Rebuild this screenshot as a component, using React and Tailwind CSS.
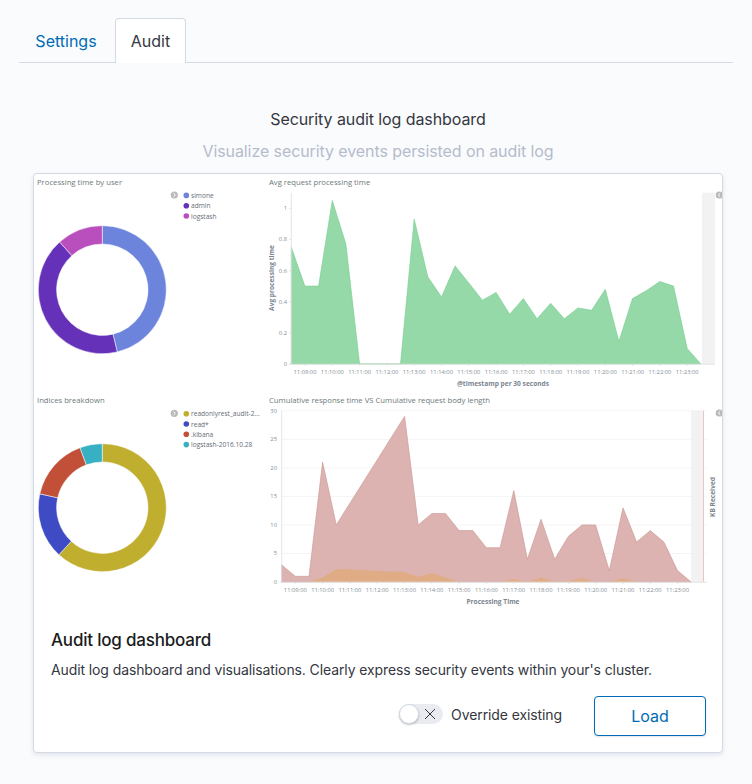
const greenData = [0.75, 0.5, 0.5, 1.05, 0.77, 0, 0, 0, 0, 0.93, 0.56, 0.43, 0.63, 0.52, 0.41, 0.46, 0.32, 0.42, 0.29, 0.39, 0.29, 0.36, 0.345, 0.48, 0.145, 0.42, 0.47, 0.53, 0.5, 0.1, 0];
const redData = [3, 1, 1, 21, 10, 13.8, 17.6, 21.4, 25.2, 29, 10, 12, 12, 9, 9, 6, 6, 16, 4, 11, 4, 8, 10, 10, 2, 13, 7, 9, 7, 2, 0];
const orangeData = [0, 0, 0, 0.8, 2.3, 2.2, 2.1, 1.95, 1.85, 1.75, 0.9, 1.6, 0.8, 0, 0, 0, 0, 0.5, 0, 0.8, 0, 0.2, 0.7, 0, 0, 0.6, 0, 0, 0, 0, 0];
const times = ['11:09:00', '11:10:00', '11:11:00', '11:12:00', '11:13:00', '11:14:00', '11:15:00', '11:16:00', '11:17:00', '11:18:00', '11:19:00', '11:20:00', '11:21:00', '11:22:00', '11:23:00'];

const chartFont = "'Open Sans', 'Liberation Sans', sans-serif";

// points of an area chart, closed along the x axis
function areaPath(data, x0, y0, stepX, scaleY) {
  const line = data.map((v, i) => `${(x0 + i * stepX).toFixed(1)},${(y0 - v * scaleY).toFixed(1)}`);
  return `M${x0},${y0} L${line.join(' L')} L${x0 + (data.length - 1) * stepX},${y0} Z`;
}

function arcPath(cx, cy, r, r2, a0, a1) {
  const pt = (rad, deg) => {
    const t = (deg * Math.PI) / 180;
    return `${(cx + rad * Math.sin(t)).toFixed(2)} ${(cy - rad * Math.cos(t)).toFixed(2)}`;
  };
  const large = a1 - a0 > 180 ? 1 : 0;
  return `M${pt(r, a0)} A${r} ${r} 0 ${large} 1 ${pt(r, a1)} L${pt(r2, a1)} A${r2} ${r2} 0 ${large} 0 ${pt(r2, a0)} Z`;
}

function Chevron({ x, y, flip }) {
  return (
    <g>
      <circle cx={x} cy={y} r="3.6" fill="#b9b9b9" />
      <path
        d={flip ? `M${x + 0.9} ${y - 1.8} L${x - 1} ${y} L${x + 0.9} ${y + 1.8}` : `M${x - 0.9} ${y - 1.8} L${x + 1} ${y} L${x - 0.9} ${y + 1.8}`}
        fill="none"
        stroke="#fff"
        strokeWidth="1"
      />
    </g>
  );
}

function DonutPanel({ viewBox, title, titleY, cy, chevronY, slices }) {
  return (
    <svg viewBox={viewBox} className="block w-full h-full" style={{ fontFamily: chartFont }}>
      <text x="37" y={titleY} fontSize="7.7" fill="#6e7a7c">{title}</text>
      <Chevron x={174.3} y={chevronY} />
      {slices.map((s, i) => (
        <g key={s.label}>
          <circle cx="186.3" cy={chevronY + 0.4 + i * 10.3} r="2.8" fill={s.color} />
          <text x="191" y={chevronY + 3 + i * 10.3} fontSize="6.6" fill="#666c75">{s.label}</text>
        </g>
      ))}
      {slices.map((s) => (
        <path key={s.color} d={arcPath(102.3, cy, 64, 45.7, s.from, s.to)} fill={s.color} stroke="#fff" strokeWidth="0.5" />
      ))}
    </svg>
  );
}

function XLabels({ x0, y, axisY }) {
  return times.map((t, i) => (
    <g key={t}>
      <line x1={x0 + i * 27.3} x2={x0 + i * 27.3} y1={axisY} y2={axisY + 2} stroke="#ddd" strokeWidth="0.7" />
      <text x={x0 + i * 27.3} y={y} fontSize="5.8" fill="#848e96" textAnchor="middle">{t}</text>
    </g>
  ));
}

function GreenChart() {
  const ticks = [0, 0.2, 0.4, 0.6, 0.8, 1];
  return (
    <svg viewBox="262 174 460 218" className="block w-full h-full" style={{ fontFamily: chartFont }}>
      <text x="269" y="185" fontSize="7.7" fill="#6e7a7c">Avg request processing time</text>
      <rect x="702" y="192.7" width="13" height="171.3" fill="#f2f2f2" />
      <path d={areaPath(greenData, 291.3, 364, 13.65, 155.7)} fill="#95d9a9" stroke="#74cd8e" strokeWidth="0.6" />
      <line x1="291.3" x2="291.3" y1="192.7" y2="364" stroke="#ddd" strokeWidth="0.8" />
      <line x1="289" x2="715" y1="364.2" y2="364.2" stroke="#e2e2e2" strokeWidth="1" />
      {ticks.map((v) => (
        <g key={v}>
          <line x1="289" x2="291.3" y1={364 - v * 155.7} y2={364 - v * 155.7} stroke="#ddd" strokeWidth="0.7" />
          <text x="287" y={366 - v * 155.7} fontSize="5.8" fill="#848e96" textAnchor="end">{v}</text>
        </g>
      ))}
      <XLabels x0={305} y={374} axisY={364} />
      <text transform="translate(274 278) rotate(-90)" fontSize="6.6" fontWeight="700" fill="#7b8590" textAnchor="middle">Avg processing time</text>
      <text x="503" y="386" fontSize="6.6" fontWeight="700" fill="#7b8590" textAnchor="middle">@timestamp per 30 seconds</text>
      <Chevron x={719.3} y={195} flip />
    </svg>
  );
}

function RedChart() {
  const ticks = [0, 5, 10, 15, 20, 25, 30];
  return (
    <svg viewBox="262 392 460 218" className="block w-full h-full" style={{ fontFamily: chartFont }}>
      <text x="269" y="403" fontSize="7.7" fill="#6e7a7c">Cumulative response time VS Cumulative request body length</text>
      <rect x="691" y="410.7" width="12.3" height="171.3" fill="#f2f2f2" />
      {ticks.map((v) => (
        <g key={v}>
          <line x1="281.7" x2="706.7" y1={582 - v * 5.71} y2={582 - v * 5.71} stroke="#f1f1f1" strokeWidth="0.8" />
          <text x="277" y={584 - v * 5.71} fontSize="5.8" fill="#848e96" textAnchor="end">{v}</text>
        </g>
      ))}
      <line x1="703.5" x2="703.5" y1="410.7" y2="582" stroke="#e3b9b6" strokeWidth="0.8" />
      <path d={areaPath(redData, 281.7, 582, 13.65, 5.71)} fill="#dcb3b0" stroke="#c99492" strokeWidth="0.6" />
      <path d={areaPath(orangeData, 281.7, 582, 13.65, 5.71)} fill="#e0ac85" />
      <line x1="281.7" x2="281.7" y1="410.7" y2="582" stroke="#ddd" strokeWidth="0.8" />
      <line x1="279.5" x2="706.7" y1="582.2" y2="582.2" stroke="#e2e2e2" strokeWidth="1" />
      <XLabels x0={295.3} y={592} axisY={582} />
      <text transform="translate(714.5 497) rotate(-90)" fontSize="6.6" fontWeight="700" fill="#7b8590" textAnchor="middle">KB Received</text>
      <text x="493" y="604" fontSize="6.6" fontWeight="700" fill="#7b8590" textAnchor="middle">Processing Time</text>
      <Chevron x={719.3} y={413} flip />
    </svg>
  );
}

const userSlices = [
  { label: 'simone', color: '#6d84dc', from: 0, to: 166.5 },
  { label: 'admin', color: '#6431b8', from: 166.5, to: 318.2 },
  { label: 'logstash', color: '#b94fbc', from: 318.2, to: 359.99 },
];

const indexSlices = [
  { label: 'readonlyrest_audit-2...', color: '#c0ae2f', from: 0, to: 222.7 },
  { label: 'read*', color: '#3f4bc5', from: 222.7, to: 282.5 },
  { label: '.kibana', color: '#c25039', from: 282.5, to: 339.6 },
  { label: 'logstash-2016.10.28', color: '#38b0c4', from: 339.6, to: 359.99 },
];

export default function App() {
  return (
    <div className="min-h-[784px] bg-[#fafbfd] pt-[18px] text-[#343741] font-['Inter','Liberation_Sans',sans-serif]">
      <div className="mx-[19px] flex h-[45px] border-b border-[#d3dae6]">
        <button className="h-[45px] w-[94px] mr-[2px] text-[16px] text-[#006bb4]">Settings</button>
        <button className="h-[45px] w-[71px] rounded-t-[4px] border border-b-0 border-[#d3dae6] bg-white text-[16px]">Audit</button>
      </div>

      <div className="ml-[33px] w-[690px]">
        <h2 className="mt-[44px] text-center text-[16px] leading-6 tracking-[-0.08px]">Security audit log dashboard</h2>
        <p className="mt-2 text-center text-[16px] leading-6 tracking-[-0.09px] text-[#b5bccc]">Visualize security events persisted on audit log</p>

        <div className="mt-[10px] h-[580px] rounded-[4px] border border-[#d3dae6] bg-white shadow-[0_2px_4px_rgba(152,162,179,0.25)]">
          <div className="grid h-[436px] grid-cols-[228px_460px] grid-rows-2">
            <DonutPanel viewBox="34 174 228 218" title="Processing time by user" titleY={185} cy={289.7} chevronY={195} slices={userSlices} />
            <GreenChart />
            <DonutPanel viewBox="34 392 228 218" title="Indices breakdown" titleY={403} cy={507.7} chevronY={413.3} slices={indexSlices} />
            <RedChart />
          </div>

          <div className="pl-[17px] pr-[16px] pt-[18px]">
            <h3 className="text-[17px] font-medium leading-6 tracking-[-0.2px] text-[#1a1c21]">Audit log dashboard</h3>
            <p className="mt-[6px] text-[14px] leading-6 tracking-[-0.105px]">Audit log dashboard and visualisations. Clearly express security events within your's cluster.</p>
            <div className="mt-[14px] flex items-center justify-end">
              <div className="mb-[4px] flex items-center">
                <div className="relative h-5 w-11 rounded-full bg-[#e9ebf0]">
                  <span className="absolute left-0 top-0 h-5 w-5 rounded-full border border-[#d3dae6] bg-white shadow-[0_1px_2px_rgba(0,0,0,0.25)]" />
                  <svg viewBox="0 0 12 12" className="absolute left-[25px] top-[4px] h-3 w-3" fill="none" stroke="#343741" strokeWidth="1">
                    <path d="M1 1 L11 11 M11 1 L1 11" />
                  </svg>
                </div>
                <span className="ml-2 text-[14px] tracking-[-0.1px]">Override existing</span>
              </div>
              <button className="ml-[32px] h-10 w-[112px] rounded-[4px] border border-[#006bb4] bg-white text-[16px] text-[#006bb4] shadow-[0_1px_2px_rgba(152,162,179,0.3)]">Load</button>
            </div>
          </div>
        </div>
      </div>
    </div>
  );
}
